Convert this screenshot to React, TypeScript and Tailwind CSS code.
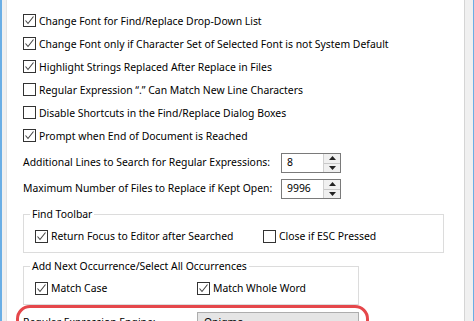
import type { ReactNode } from 'react';

function Check({ checked }: { checked: boolean }) {
  return (
    <span className="flex h-[13px] w-[13px] shrink-0 items-center justify-center border border-[#333] bg-white">
      {checked && (
        <svg width="11" height="11" viewBox="0 0 11 11">
          <path d="M1.5 5.5 L4 8.5 L9.5 1.5" fill="none" stroke="#444" strokeWidth="1.1" />
        </svg>
      )}
    </span>
  );
}

function CheckRow({ checked, label, className = '' }: { checked: boolean; label: string; className?: string }) {
  return (
    <div className={`flex items-center gap-[3px] leading-[16px] ${className}`}>
      <Check checked={checked} />
      <span>{label}</span>
    </div>
  );
}

function Spin({ value }: { value: string }) {
  return (
    <div className="flex h-[20px] w-[60px] border border-[#7a7a7a] bg-white">
      <div className="flex flex-1 items-center pl-[5px]">{value}</div>
      <div className="flex w-[17px] flex-col border-l border-[#d0d0d0] bg-[#f0f0f0]">
        <div className="flex flex-1 items-center justify-center border-b border-[#c8c8c8]">
          <svg width="7" height="4" viewBox="0 0 7 4"><path d="M0 4 L3.5 0 L7 4Z" fill="#222" /></svg>
        </div>
        <div className="flex flex-1 items-center justify-center">
          <svg width="7" height="4" viewBox="0 0 7 4"><path d="M0 0 L3.5 4 L7 0Z" fill="#222" /></svg>
        </div>
      </div>
    </div>
  );
}

function Group({ title, className, children }: { title: string; className: string; children: ReactNode }) {
  return (
    <div className={`relative border border-[#dcdcdc] ${className}`}>
      <span className="absolute left-[6px] top-[-9px] bg-white px-[2px] leading-[16px]">{title}</span>
      {children}
    </div>
  );
}

export default function App() {
  const rows: [boolean, string][] = [
    [true, 'Change Font for Find/Replace Drop-Down List'],
    [true, 'Change Font only if Character Set of Selected Font is not System Default'],
    [true, 'Highlight Strings Replaced After Replace in Files'],
    [false, 'Regular Expression “.” Can Match New Line Characters'],
    [false, 'Disable Shortcuts in the Find/Replace Dialog Boxes'],
    [true, 'Prompt when End of Document is Reached'],
  ];

  return (
    <div className="relative flex h-[321px] w-[474px] overflow-hidden bg-white font-['Noto_Sans',sans-serif] text-[10.4px] text-black">
      <div className="w-[2px] bg-[#6aaee5]" />
      <div className="w-[5px] border-r border-[#e3e3e3] bg-[#f0f0f0]" />
      <div className="flex-1 pl-[16px] pt-[9px]">
        {rows.map(([c, l]) => (
          <CheckRow key={l} checked={c} label={l} className="h-[23px]" />
        ))}
        <div className="mt-[6px] flex h-[20px] items-center">
          <span className="w-[258px]">Additional Lines to Search for Regular Expressions:</span>
          <Spin value="8" />
        </div>
        <div className="mt-[6px] flex h-[20px] items-center">
          <span className="w-[258px]">Maximum Number of Files to Replace if Kept Open:</span>
          <Spin value="9996" />
        </div>
        <Group title="Find Toolbar" className="mt-[15px] h-[39px] w-[421px]">
          <div className="flex pl-[11px] pt-[13px]">
            <CheckRow checked label="Return Focus to Editor after Searched" className="w-[228px]" />
            <CheckRow checked={false} label="Close if ESC Pressed" />
          </div>
        </Group>
        <Group title="Add Next Occurrence/Select All Occurrences" className="mt-[13px] h-[39px] w-[336px]">
          <div className="flex pl-[11px] pt-[13px]">
            <CheckRow checked label="Match Case" className="w-[162px]" />
            <CheckRow checked label="Match Whole Word" />
          </div>
        </Group>
        <div className="mt-[7px] flex items-start">
          <span className="w-[174px] pt-[3px]">Regular Expression Engine:</span>
          <div className="flex h-[22px] w-[162px] items-center border border-[#adadad] bg-[#e5e5e5] pl-[6px]">Onigmo</div>
        </div>
      </div>
      <div className="w-[9px] border-l border-[#d5d5d5] bg-[#f0f0f0]" />
      <div className="w-[1px] bg-[#6aaee5]" />
      <div className="pointer-events-none absolute left-[16px] top-[305px] h-[60px] w-[353px] rounded-[14px] border-[3px] border-[#e5474b]" />
    </div>
  );
}
